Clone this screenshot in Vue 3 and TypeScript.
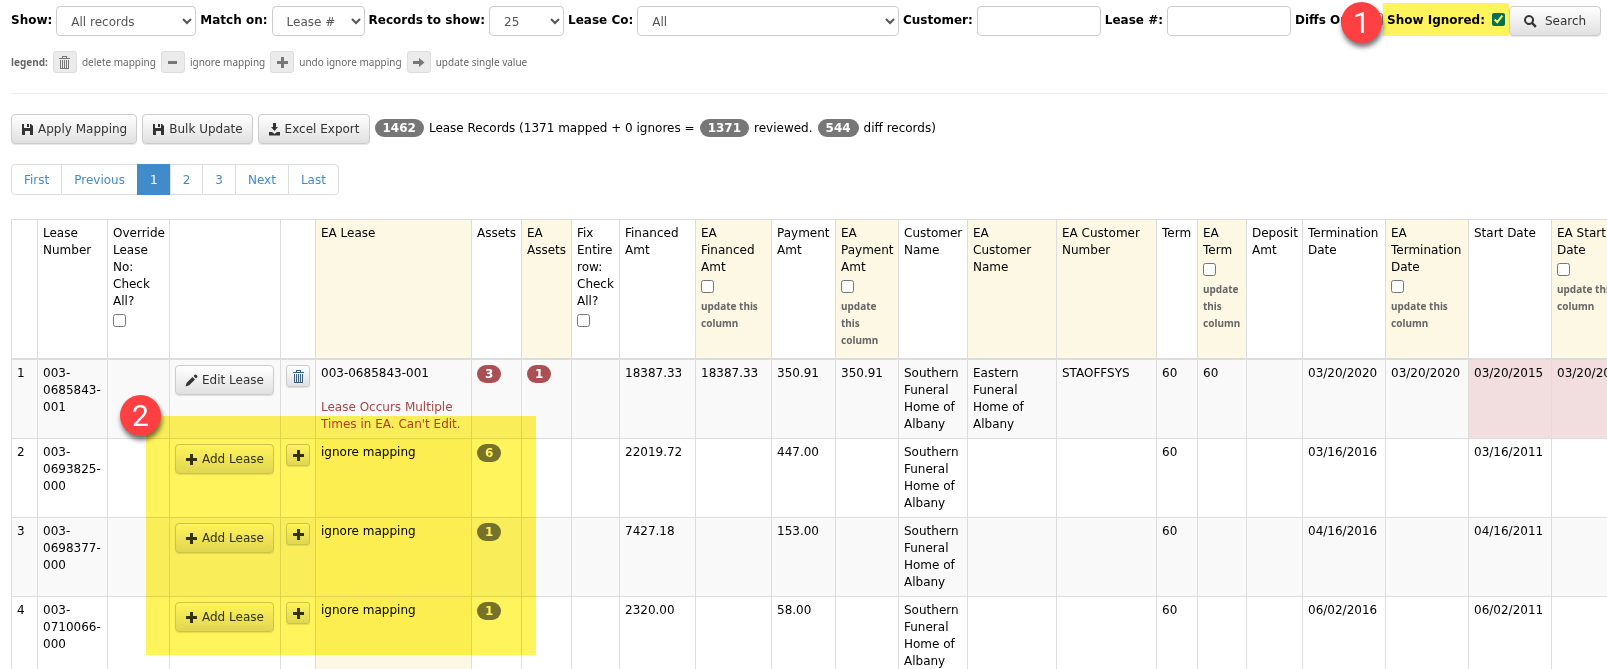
<script setup lang="ts">
import { ref } from 'vue'

type Icon = 'save' | 'download' | 'pencil' | 'trash' | 'plus' | 'minus' | 'arrow' | 'search'

const icons: Record<Icon, string> = {
  save: 'M1 1h2v4h6V1h1l2 2v9H9V8H4v4H1zM6 1h2v3H6z',
  download: 'M5 0h3v4h2L6.500 8 3 4h2zM1 9h3l2.500 2L9 9h3v3.500H1z',
  pencil: 'M0.500 12.500l1.200-3.700 5.800-5.800 2.500 2.500-5.800 5.800zM8.500 2 9.800.8a1 1 0 0 1 1.400 0l1 1a1 1 0 0 1 0 1.400L11 4.500z',
  trash: 'M4 0h5v2h3v1H1V2h3zM5 1v1h3V1zM2 4h9v9H2zM3 4v8h1V4zM5 4v8h1V4zM7 4v8h1V4zM9 4v8h1V4z',
  plus: 'M5 1h3v4h4v3H8v4H5V8H1V5h4z',
  minus: 'M2 5h9v3H2z',
  arrow: 'M1 5h6V2l5.500 4.500L7 11V8H1z',
  search: 'M5 0a5 5 0 1 0 2.600 9.300L11 12.700 12.700 11 9.300 7.600A5 5 0 0 0 5 0zM5 2a3 3 0 1 1 0 6 3 3 0 0 1 0-6z',
}

const show = ref('All records')
const matchOn = ref('Lease #')
const perPage = ref('25')
const leaseCo = ref('All')
const customer = ref('')
const leaseNo = ref('')
const diffsOnly = ref(false)
const showIgnored = ref(true)

const legend: { icon: Icon; text: string }[] = [
  { icon: 'trash', text: 'delete mapping' },
  { icon: 'minus', text: 'ignore mapping' },
  { icon: 'plus', text: 'undo ignore mapping' },
  { icon: 'arrow', text: 'update single value' },
]

const pages = ['First', 'Previous', '1', '2', '3', 'Next', 'Last']

interface Column { key: string; label: string; ea?: boolean; check?: boolean; note?: string }

const columns: Column[] = [
  { key: 'index', label: '' },
  { key: 'number', label: 'Lease\nNumber' },
  { key: 'override', label: 'Override\nLease\nNo:\nCheck\nAll?', check: true },
  { key: 'edit', label: '' },
  { key: 'action', label: '' },
  { key: 'ea-lease', label: 'EA Lease', ea: true },
  { key: 'assets', label: 'Assets' },
  { key: 'ea-assets', label: 'EA\nAssets', ea: true },
  { key: 'fix', label: 'Fix\nEntire\nrow:\nCheck\nAll?', check: true },
  { key: 'financed', label: 'Financed\nAmt' },
  { key: 'ea-financed', label: 'EA\nFinanced\nAmt', ea: true, check: true, note: 'update this\ncolumn' },
  { key: 'payment', label: 'Payment\nAmt' },
  { key: 'ea-payment', label: 'EA\nPayment\nAmt', ea: true, check: true, note: 'update\nthis\ncolumn' },
  { key: 'customer', label: 'Customer\nName' },
  { key: 'ea-customer', label: 'EA\nCustomer\nName', ea: true },
  { key: 'ea-customer-no', label: 'EA Customer\nNumber', ea: true },
  { key: 'term', label: 'Term' },
  { key: 'ea-term', label: 'EA\nTerm', ea: true, check: true, note: 'update\nthis\ncolumn' },
  { key: 'deposit', label: 'Deposit\nAmt' },
  { key: 'termination', label: 'Termination\nDate' },
  { key: 'ea-termination', label: 'EA\nTermination\nDate', ea: true, check: true, note: 'update this\ncolumn' },
  { key: 'start', label: 'Start Date' },
  { key: 'ea-start', label: 'EA Start\nDate', ea: true, check: true, note: 'update this\ncolumn' },
]

interface Row {
  lease: string[]
  mapped: boolean
  assets: number
  values: string[]
}

const southern = 'Southern\nFuneral\nHome of\nAlbany'
const eastern = 'Eastern\nFuneral\nHome of\nAlbany'

// values: financed through EA start date, in column order
const rows: Row[] = [
  { lease: ['003-', '0685843-', '001'], mapped: true, assets: 3,
    values: ['18387.33', '18387.33', '350.91', '350.91', southern, eastern, 'STAOFFSYS', '60', '60', '', '03/20/2020', '03/20/2020', '03/20/2015', '03/20/2016'] },
  { lease: ['003-', '0693825-', '000'], mapped: false, assets: 6,
    values: ['22019.72', '', '447.00', '', southern, '', '', '60', '', '', '03/16/2016', '', '03/16/2011', ''] },
  { lease: ['003-', '0698377-', '000'], mapped: false, assets: 1,
    values: ['7427.18', '', '153.00', '', southern, '', '', '60', '', '', '04/16/2016', '', '04/16/2011', ''] },
  { lease: ['003-', '0710066-', '000'], mapped: false, assets: 1,
    values: ['2320.00', '', '58.00', '', southern, '', '', '60', '', '', '06/02/2016', '', '06/02/2011', ''] },
]
</script>

<template>
  <main class="page">
    <form class="filters" @submit.prevent>
      <label for="show">Show:</label>
      <select id="show" v-model="show" class="field show"><option>All records</option></select>
      <label for="match">Match on:</label>
      <select id="match" v-model="matchOn" class="field match"><option>Lease #</option></select>
      <label for="per-page">Records to show:</label>
      <select id="per-page" v-model="perPage" class="field per-page"><option>25</option></select>
      <label for="lease-co">Lease Co:</label>
      <select id="lease-co" v-model="leaseCo" class="field lease-co"><option>All</option></select>
      <label for="customer">Customer:</label>
      <input id="customer" v-model="customer" type="text" class="field text">
      <label for="lease-no">Lease #:</label>
      <input id="lease-no" v-model="leaseNo" type="text" class="field text">
      <label class="diffs">Diffs Only: <input v-model="diffsOnly" type="checkbox"></label>
      <label class="ignored">Show Ignored: <input v-model="showIgnored" type="checkbox"><span class="marker">1</span></label>
      <button type="submit" class="btn search"><svg class="icon" viewBox="0 0 13 13"><path :d="icons.search" fill-rule="evenodd" /></svg>Search</button>
    </form>

    <div class="legend">
      <strong>legend:</strong>
      <template v-for="l in legend" :key="l.icon">
        <button type="button" class="btn small" disabled :aria-label="l.text"><svg class="icon" viewBox="0 0 13 13"><path :d="icons[l.icon]" fill-rule="evenodd" /></svg></button>
        <span>{{ l.text }}</span>
      </template>
    </div>

    <hr>

    <div class="actions">
      <button type="button" class="btn"><svg class="icon" viewBox="0 0 13 13"><path :d="icons.save" fill-rule="evenodd" /></svg>Apply Mapping</button>
      <button type="button" class="btn"><svg class="icon" viewBox="0 0 13 13"><path :d="icons.save" fill-rule="evenodd" /></svg>Bulk Update</button>
      <button type="button" class="btn"><svg class="icon" viewBox="0 0 13 13"><path :d="icons.download" fill-rule="evenodd" /></svg>Excel Export</button>
      <span class="badge">1462</span>
      <span>Lease Records (1371 mapped + 0 ignores =</span>
      <span class="badge">1371</span>
      <span>reviewed.</span>
      <span class="badge">544</span>
      <span>diff records)</span>
    </div>

    <nav class="pages">
      <a v-for="p in pages" :key="p" href="#" :class="{ current: p === '1' }">{{ p }}</a>
    </nav>

    <div class="grid">
      <table>
        <colgroup><col v-for="c in columns" :key="c.key" :class="'c-' + c.key"></colgroup>
        <thead>
          <tr>
            <th v-for="c in columns" :key="c.key" :class="{ ea: c.ea }">
              <label v-if="c.check">{{ c.label }}<input type="checkbox"><small v-if="c.note">{{ c.note }}</small></label>
              <template v-else>{{ c.label }}</template>
            </th>
          </tr>
        </thead>
        <tbody>
          <tr v-for="(r, i) in rows" :key="i">
            <td>{{ i + 1 }}</td>
            <td><template v-for="part in r.lease" :key="part">{{ part }}<wbr></template></td>
            <td></td>
            <td>
              <button type="button" class="btn"><svg class="icon" viewBox="0 0 13 13"><path :d="r.mapped ? icons.pencil : icons.plus" fill-rule="evenodd" /></svg>{{ r.mapped ? 'Edit Lease' : 'Add Lease' }}</button>
            </td>
            <td>
              <button type="button" class="btn small" :class="{ blue: r.mapped }" :aria-label="r.mapped ? 'delete mapping' : 'undo ignore mapping'"><svg class="icon" viewBox="0 0 13 13"><path :d="r.mapped ? icons.trash : icons.plus" fill-rule="evenodd" /></svg></button>
            </td>
            <td v-if="r.mapped">{{ r.lease.join('') }}<p class="error">Lease Occurs Multiple Times in EA. Can't Edit.</p></td>
            <td v-else class="ea">ignore mapping</td>
            <td><span class="badge" :class="{ red: r.mapped }">{{ r.assets }}</span></td>
            <td><span v-if="r.mapped" class="badge red">1</span></td>
            <td></td>
            <td v-for="(v, j) in r.values" :key="j" :class="{ diff: r.mapped && j > 11 }">{{ v }}</td>
          </tr>
        </tbody>
      </table>
      <div class="highlight"></div>
      <span class="marker second">2</span>
    </div>
  </main>
</template>

<style>
body { background: #fff; }
</style>

<style scoped>
* { box-sizing: border-box; }
.page {
  height: 100vh;
  overflow: hidden;
  padding: 6px 0 0 11px;
  color: #000;
  font: 12px/17px Verdana, "DejaVu Sans", sans-serif;
}
button, input, select { font: inherit; }
input[type="checkbox"] { width: 13px; height: 13px; margin: 0; }

.filters { display: flex; align-items: center; gap: 4px; padding-right: 6px; height: 30px; white-space: nowrap; }
.filters label { font-weight: bold; padding-bottom: 1px; }
.field { height: 30px; border: 1px solid #ccc; border-radius: 4px; background: #fff; color: #555; min-width: 0; }
select.field { padding: 1px 0 0 10px; }
.show { width: 140px; }
.match { width: 93px; }
.per-page { width: 75px; }
.lease-co { flex: 1; }
.text { width: 124px; }
.filters label input { margin-bottom: 3px; }
.filters .diffs { width: 88px; display: flex; justify-content: space-between; align-items: center; }
.filters .ignored {
  position: relative;
  display: flex;
  align-items: center;
  justify-content: space-between;
  width: 126px;
  height: 33px;
  margin: 0 -4px 3px -4px;
  padding: 2px 4px 0;
}
.ignored::before, .highlight {
  content: "";
  position: absolute;
  background: #fff45b;
  mix-blend-mode: multiply;
  pointer-events: none;
}
.ignored::before { inset: 0; }
.marker {
  position: absolute;
  left: -42px;
  top: -1px;
  width: 41px;
  height: 41px;
  border-radius: 50%;
  background: #ff4043;
  color: #fff;
  font: 30px/41px Roboto, sans-serif;
  text-align: center;
  box-shadow: 1px 4px 5px rgba(0, 0, 0, 0.55);
}

.btn {
  display: inline-flex;
  align-items: center;
  justify-content: center;
  gap: 4px;
  height: 30px;
  padding: 0 9px;
  border: 1px solid #ccc;
  border-radius: 4px;
  background: linear-gradient(#fff, #e0e0e0);
  box-shadow: 0 1px 1px rgba(0, 0, 0, 0.1);
  color: #333;
  white-space: nowrap;
}
.icon { width: 13px; height: 13px; fill: currentColor; flex: none; }
.search { width: 92px; gap: 8px; }
.small { width: 24px; height: 22px; padding: 0; border-radius: 3px; }
.blue { color: #3a5f80; }

.legend {
  display: flex;
  align-items: center;
  gap: 5px;
  margin-top: 15px;
  height: 22px;
  font-family: "Noto Sans", sans-serif;
  font-size: 10px;
  color: #666;
}
.legend .small { background: #ebebeb; border-color: #ddd; box-shadow: none; color: #777; }
hr { height: 1px; border: 0; margin: 20px 0; background: #eee; }

.actions { display: flex; align-items: center; gap: 5px; }
.actions span { white-space: nowrap; margin-bottom: 2px; }
.badge {
  display: inline-block;
  height: 18px;
  padding: 0 8px;
  border-radius: 9px;
  background: #777;
  color: #fff;
  font-weight: bold;
  line-height: 18px;
  vertical-align: top;
}
.red { background: #a95055; }

.pages { display: flex; margin: 20px 0 24px; }
.pages a {
  height: 31px;
  padding: 0 12px;
  margin-left: -1px;
  border: 1px solid #ddd;
  color: #428bca;
  line-height: 30px;
  text-decoration: none;
}
.pages a:first-child { margin-left: 0; border-radius: 4px 0 0 4px; }
.pages a:last-child { border-radius: 0 4px 4px 0; }
.pages .current { background: #428bca; border-color: #428bca; color: #fff; }

.grid { position: relative; }
table { table-layout: fixed; width: 1651px; border-collapse: collapse; }
th, td { border: 1px solid #ddd; padding: 5px; text-align: left; vertical-align: top; font-weight: normal; white-space: pre-line; }
th { border-bottom-width: 2px; padding-bottom: 9px; }
th label { display: block; }
th input[type="checkbox"] { display: block; margin: 4px 0 5px; }
small { display: block; font-family: "Noto Sans", sans-serif; font-size: 10px; font-weight: bold; color: #666; }
tbody tr:nth-child(odd) { background: #f9f9f9; }
tbody tr { height: 79px; }
.ea { background: #fcf8e3; }
.diff { background: #f2dede; }
td .btn { vertical-align: top; }
.error { margin: 17px 0 0; color: #a94442; white-space: normal; }

.c-index { width: 26px; }
.c-number { width: 70px; }
.c-override { width: 62px; }
.c-edit { width: 111px; }
.c-action { width: 35px; }
.c-ea-lease { width: 156px; }
.c-assets, .c-ea-assets { width: 50px; }
.c-fix { width: 48px; }
.c-financed, .c-ea-financed { width: 76px; }
.c-payment { width: 64px; }
.c-ea-payment { width: 63px; }
.c-customer { width: 69px; }
.c-ea-customer { width: 89px; }
.c-ea-customer-no { width: 100px; }
.c-term { width: 41px; }
.c-ea-term { width: 49px; }
.c-deposit { width: 56px; }
.c-termination, .c-ea-termination, .c-start { width: 83px; }

.highlight { left: 135px; top: 197px; width: 390px; height: 239px; }
.second { left: 109px; top: 176px; }
</style>
